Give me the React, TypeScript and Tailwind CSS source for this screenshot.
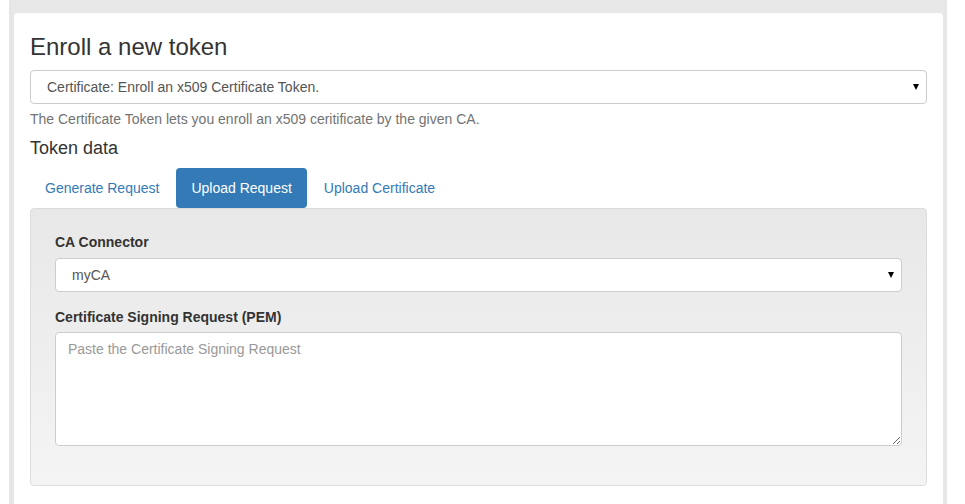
import React, { useState } from 'react';

const tabs = ['Generate Request', 'Upload Request', 'Upload Certificate'];

const Arrow: React.FC = () => (
  <span className="pointer-events-none absolute right-[8px] top-1/2 -translate-y-1/2 border-x-[3.5px] border-t-[6px] border-x-transparent border-t-black" />
);

const App: React.FC = () => {
  const [active, setActive] = useState(1);
  const [csr, setCsr] = useState('');

  return (
    <div className="min-h-screen bg-white font-['Liberation_Sans',Arial,sans-serif] text-[14px] leading-[20px] text-[#333]">
      <div className="ml-[9px] h-[504px] w-[938px] overflow-hidden border-x-[3px] border-[#e6e6e6] bg-[#e8e8e8] pl-[2px] pr-[1px] pt-[13px]">
        <div className="h-full rounded-t-[4px] bg-white px-4 pt-[21px]">
          <h3 className="mb-[10px] text-[24px] leading-[26px]">Enroll a new token</h3>

          <div className="relative">
            <select className="block h-[34px] w-full appearance-none rounded-[4px] border border-[#ccc] bg-white px-4 text-[14px] text-[#555] outline-none">
              <option>Certificate: Enroll an x509 Certificate Token.</option>
            </select>
            <Arrow />
          </div>
          <p className="mt-[5px] text-[#737373]">
            The Certificate Token lets you enroll an x509 ceritificate by the given CA.
          </p>

          <h4 className="mt-[9px] text-[18px] leading-[20px]">Token data</h4>

          <ul className="mt-[10px] flex gap-[2px]">
            {tabs.map((t, i) => (
              <li key={t}>
                <button
                  onClick={() => setActive(i)}
                  className={
                    i === active
                      ? 'block h-[40px] rounded-[4px] bg-[#337ab7] px-[15px] text-white'
                      : 'block h-[40px] rounded-[4px] px-[15px] text-[#337ab7]'
                  }
                >
                  {t}
                </button>
              </li>
            ))}
          </ul>

          <div className="rounded-[4px] border border-[#dcdcdc] bg-linear-to-b from-[#e8e8e8] to-[#f4f4f4] px-6 pb-6 pt-[23px]">
            <div className="mb-[15px]">
              <label className="mb-[6px] block font-bold">CA Connector</label>
              <div className="relative">
                <select className="block h-[34px] w-full appearance-none rounded-[4px] border border-[#ccc] bg-white px-4 text-[14px] text-[#555] outline-none">
                  <option>myCA</option>
                </select>
                <Arrow />
              </div>
            </div>
            <div className="mb-[15px]">
              <label className="mb-[5px] block font-bold">Certificate Signing Request (PEM)</label>
              <textarea
                value={csr}
                onChange={(e) => setCsr(e.target.value)}
                placeholder="Paste the Certificate Signing Request"
                className="block h-[114px] w-full rounded-[4px] border border-[#ccc] bg-white px-3 py-[6px] text-[14px] text-[#555] outline-none placeholder:text-[#999]"
              />
            </div>
          </div>
        </div>
      </div>
    </div>
  );
};

export default App;
